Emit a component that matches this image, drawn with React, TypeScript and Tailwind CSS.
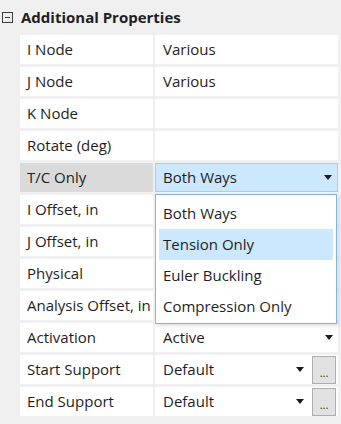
import React from 'react';

type Row = {
  label: string;
  value?: string;
  arrow?: boolean;
  button?: boolean;
  selected?: boolean;
};

const ROWS: Row[] = [
  { label: 'I Node', value: 'Various' },
  { label: 'J Node', value: 'Various' },
  { label: 'K Node' },
  { label: 'Rotate (deg)' },
  { label: 'T/C Only', value: 'Both Ways', arrow: true, selected: true },
  { label: 'I Offset, in' },
  { label: 'J Offset, in' },
  { label: 'Physical' },
  { label: 'Analysis Offset, in' },
  { label: 'Activation', value: 'Active', arrow: true },
  { label: 'Start Support', value: 'Default', arrow: true, button: true },
  { label: 'End Support', value: 'Default', arrow: true, button: true },
];

const OPTIONS = ['Both Ways', 'Tension Only', 'Euler Buckling', 'Compression Only'];

const Caret = () => (
  <svg width="8" height="5" viewBox="0 0 8 5" className="shrink-0">
    <path d="M0 0 H8 L4 5 Z" fill="#1a1a1a" />
  </svg>
);

export default function App() {
  return (
    <div
      className="relative w-[341px] h-[424px] bg-[#f0f0f0] text-[#1e1e1e] overflow-hidden"
      style={{ fontFamily: '"Open Sans", "Noto Sans", sans-serif' }}
    >
      {/* Section header */}
      <div className="flex items-center h-[35px] pl-[2px]">
        <div className="w-[11px] h-[11px] border border-[#3c3c3c] flex items-center justify-center mr-[8px]">
          <div className="w-[5px] h-px bg-[#3c3c3c]" />
        </div>
        <span className="text-[15px] font-bold">Additional Properties</span>
      </div>

      {/* Property grid */}
      <div className="flex flex-col gap-[3px] pl-[20px] pr-[3px]">
        {ROWS.map((r) => {
          const valueBox = r.selected
            ? 'bg-[#cce8ff] border border-[#99d1ff] pl-[7px] pr-[5px]'
            : r.button
              ? 'bg-white pl-[8px] pr-[2px]'
              : 'bg-white pl-[8px] pr-[5px]';
          return (
            <div key={r.label} className="flex gap-[2px] h-[29px]">
              <div
                className={`w-[133px] shrink-0 flex items-center pl-[7px] text-[15px] whitespace-nowrap ${
                  r.selected ? 'bg-[#dadada]' : 'bg-white'
                }`}
              >
                {r.label}
              </div>
              <div className={`flex-1 flex items-center text-[15px] ${valueBox}`}>
                <span className="flex-1 whitespace-nowrap">{r.value}</span>
                {r.arrow && <Caret />}
                {r.button && (
                  <div className="ml-[8px] w-[24px] h-[28px] bg-[#e1e1e1] border border-[#adadad] flex items-end justify-center pb-[5px] text-[11px] leading-none">
                    ...
                  </div>
                )}
              </div>
            </div>
          );
        })}
      </div>

      {/* Open dropdown list */}
      <div className="absolute left-[155px] top-[194px] w-[182px] bg-white border border-[#7eb4ea] px-[3px] pt-[3px] pb-[1px] shadow-[2px_2px_3px_rgba(0,0,0,0.12)]">
        {OPTIONS.map((o, i) => (
          <div
            key={o}
            className={`h-[31px] flex items-center pl-[4px] text-[15px] whitespace-nowrap ${
              i === 1 ? 'bg-[#cce8ff]' : ''
            }`}
          >
            {o}
          </div>
        ))}
      </div>
    </div>
  );
}
